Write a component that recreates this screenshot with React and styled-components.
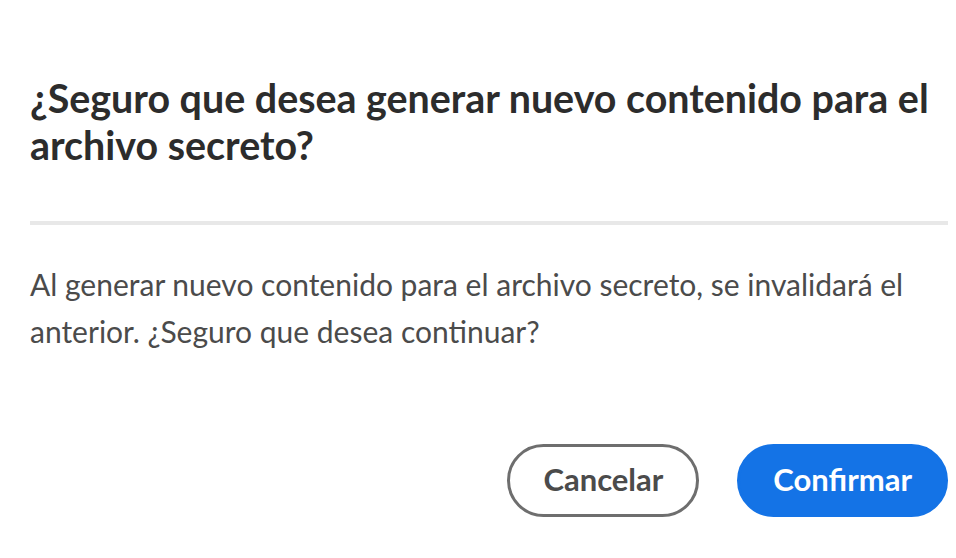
import React from 'react';
import styled, { createGlobalStyle } from 'styled-components';

const GlobalStyle = createGlobalStyle`
  html, body {
    margin: 0;
    padding: 0;
    background: #ffffff;
  }
  body {
    font-family: Lato, "Open Sans", sans-serif;
  }
`;

const Dialog = styled.div`
  width: 956px;
  height: 558px;
  box-sizing: border-box;
  padding: 74px 8px 0 30px;
  display: flex;
  flex-direction: column;
  background: #fff;
`;

const Title = styled.h2`
  margin: 0;
  font-size: 39.4px;
  font-weight: 700;
  line-height: 47px;
  color: #2c2c2c;
`;

const Divider = styled.hr`
  margin: 53px 0 0 0;
  border: none;
  height: 4px;
  background: #e8e8e8;
`;

const Body = styled.p`
  margin: 36px 0 0 0;
  font-size: 30px;
  line-height: 47px;
  color: #4b4b4b;
`;

const Footer = styled.div`
  margin-top: 89px;
  display: flex;
  justify-content: flex-end;
  gap: 38px;
`;

const Button = styled.button`
  height: 73px;
  box-sizing: border-box;
  padding: 0 33px 3px;
  border-radius: 37px;
  font-family: Lato, "Open Sans", sans-serif;
  font-size: 31px;
  font-weight: 700;
  cursor: pointer;
  border: 3px solid ${p => (p.$primary ? '#1473e6' : '#6e6e6e')};
  background: ${p => (p.$primary ? '#1473e6' : '#ffffff')};
  color: ${p => (p.$primary ? '#ffffff' : '#4b4b4b')};
`;

export default function App() {
  return (
    <>
      <GlobalStyle />
      <Dialog>
        <Title>¿Seguro que desea generar nuevo contenido para el archivo secreto?</Title>
        <Divider />
        <Body>
          Al generar nuevo contenido para el archivo secreto, se invalidará el anterior. ¿Seguro que desea continuar?
        </Body>
        <Footer>
          <Button>Cancelar</Button>
          <Button $primary>Confirmar</Button>
        </Footer>
      </Dialog>
    </>
  );
}
